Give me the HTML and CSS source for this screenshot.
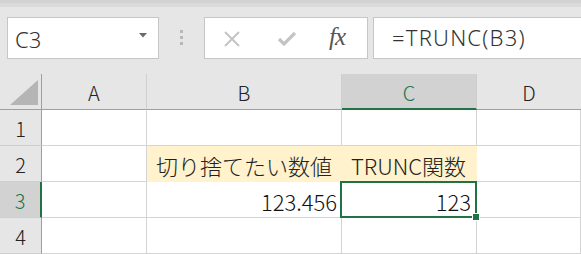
FILE: index.html
```html
<!DOCTYPE html>
<html lang="ja">
<head>
<meta charset="utf-8">
<link rel="stylesheet" href="styles.css">
</head>
<body>
<div class="app">
  <div class="topline"></div>
  <div class="toolbar">
    <div class="namebox">
      <span class="name">C3</span>
      <svg class="caret" width="8" height="5" viewBox="0 0 8 5"><path d="M0 0H8L4 4.5Z" fill="#6a6a6a"/></svg>
    </div>
    <div class="dots"><i></i><i></i><i></i></div>
    <div class="fbtns">
      <svg class="btn" width="18" height="18" viewBox="0 0 18 18"><path d="M2 2L16 16M16 2L2 16" stroke="#c4c4c4" stroke-width="2" fill="none"/></svg>
      <svg class="btn" width="20" height="18" viewBox="0 0 20 18"><path d="M2 9L7 14L18 3" stroke="#c4c4c4" stroke-width="3.2" fill="none"/></svg>
      <span class="fx">fx</span>
    </div>
    <div class="formula">=TRUNC(B3)</div>
  </div>
  <div class="sheet">
    <div class="cell corner"><svg width="28" height="25" viewBox="0 0 28 25"><path d="M28 0V25H0Z" fill="#b5b5b5"/></svg></div>
    <div class="cell colh">A</div>
    <div class="cell colh">B</div>
    <div class="cell colh sel-col">C</div>
    <div class="cell colh last">D</div>

    <div class="cell rowh">1</div>
    <div class="cell"></div>
    <div class="cell"></div>
    <div class="cell"></div>
    <div class="cell"></div>

    <div class="cell rowh">2</div>
    <div class="cell"></div>
    <div class="cell fill text">切り捨てたい数値</div>
    <div class="cell fill text">TRUNC関数</div>
    <div class="cell"></div>

    <div class="cell rowh sel-row">3</div>
    <div class="cell"></div>
    <div class="cell num">123.456</div>
    <div class="cell num active">123<span class="handle"></span></div>
    <div class="cell"></div>

    <div class="cell rowh">4</div>
    <div class="cell"></div>
    <div class="cell"></div>
    <div class="cell"></div>
    <div class="cell"></div>
  </div>
</div>
</body>
</html>
```
FILE: styles.css
```css
html, body {
  margin: 0;
  padding: 0;
  background: #ffffff;
}
body {
  font-family: "Noto Sans CJK JP", "Noto Sans", sans-serif;
  font-weight: 300;
  overflow: hidden;
}
.app {
  width: 581px;
  height: 254px;
  overflow: hidden;
}
.topline {
  height: 3px;
  background: #d2d2d2;
  border-bottom: 4px solid #dadada;
}
.toolbar {
  height: 67px;
  background: #e6e6e6;
  display: flex;
  align-items: flex-start;
  padding-top: 10px;
  box-sizing: border-box;
}
.namebox {
  margin-left: 7px;
  width: 152px;
  height: 42px;
  box-sizing: border-box;
  background: #fff;
  border: 1px solid #c6c6c6;
  display: flex;
  align-items: center;
  justify-content: space-between;
  padding: 0 11px 0 7px;
}
.name {
  font-size: 22px;
  color: #333;
  font-family: "Noto Sans", "Noto Sans CJK JP", sans-serif;
  font-weight: 300;
  line-height: 1;
  margin-top: 2px;
}
.caret {
  margin-top: -6px;
}
.dots {
  width: 45px;
  display: flex;
  flex-direction: column;
  align-items: center;
  gap: 3px;
  padding-top: 13px;
}
.dots i {
  display: block;
  width: 3px;
  height: 3px;
  background: #b8b8b8;
}
.fbtns {
  width: 164px;
  height: 42px;
  box-sizing: border-box;
  background: #fff;
  border: 1px solid #c6c6c6;
  display: flex;
  align-items: center;
  padding-left: 18px;
}
.fbtns .btn:first-child {
  margin-right: 36px;
  margin-top: 2px;
}
.fbtns .btn:nth-child(2) {
  margin-right: 32px;
  margin-top: 2px;
}
.fx {
  font-family: "Liberation Serif", serif;
  font-style: italic;
  font-weight: 400;
  font-size: 25px;
  color: #555;
  letter-spacing: -1px;
  margin-top: -3px;
}
.formula {
  margin-left: 5px;
  flex: 1;
  height: 42px;
  box-sizing: border-box;
  background: #fff;
  border: 1px solid #c6c6c6;
  border-right: none;
  font-family: "Noto Sans", "Noto Sans CJK JP", sans-serif;
  font-weight: 300;
  font-size: 22px;
  letter-spacing: 1.2px;
  color: #333;
  padding-left: 18px;
  line-height: 38px;
}
.sheet {
  display: grid;
  grid-template-columns: 42px 105px 195px 135px 104px;
  grid-template-rows: 36px 36px 36px 36px 36px;
  font-size: 20px;
  color: #111;
}
.cell {
  box-sizing: border-box;
  border-right: 1px solid #d4d4d4;
  border-bottom: 1px solid #d4d4d4;
  background: #fff;
  display: flex;
  align-items: center;
  line-height: 1;
}
.corner {
  background: #e6e6e6;
  border-right: 1px solid #9f9f9f;
  border-bottom: 1px solid #9f9f9f;
  align-items: flex-end;
  justify-content: flex-end;
  padding: 0 3px 4px 0;
}
.corner svg {
  display: block;
}
.colh {
  background: #e6e6e6;
  border-right: 1px solid #cfcfcf;
  border-bottom: 1px solid #9f9f9f;
  justify-content: center;
  color: #222;
  padding-top: 2px;
}
.colh.last {
  border-right: none;
}
.sel-col {
  background: #d2d2d2;
  color: #217346;
  border-bottom: 2px solid #217346;
  padding-top: 3px;
}
.rowh {
  background: #e6e6e6;
  border-right: 1px solid #9f9f9f;
  border-bottom: 1px solid #cfcfcf;
  justify-content: center;
  color: #222;
  padding-top: 2px;
}
.sel-row {
  background: #d2d2d2;
  color: #217346;
  border-right: 2px solid #217346;
}
.fill {
  background: #fff2cc;
  border-right: none;
  border-bottom: none;
}
.text {
  font-size: 22px;
  padding-left: 9px;
  padding-top: 2px;
  color: #222;
}
.num {
  justify-content: flex-end;
  font-size: 22px;
  padding-right: 4px;
  padding-top: 3px;
  color: #111;
}
.active {
  position: relative;
  padding-right: 5px;
}
.active::after {
  content: "";
  position: absolute;
  left: -2px;
  top: -1px;
  right: -1px;
  bottom: -1px;
  border: 2px solid #217346;
}
.handle {
  position: absolute;
  right: -4px;
  bottom: -4px;
  width: 6px;
  height: 6px;
  background: #217346;
  border: 1px solid #fff;
  z-index: 2;
}
```
